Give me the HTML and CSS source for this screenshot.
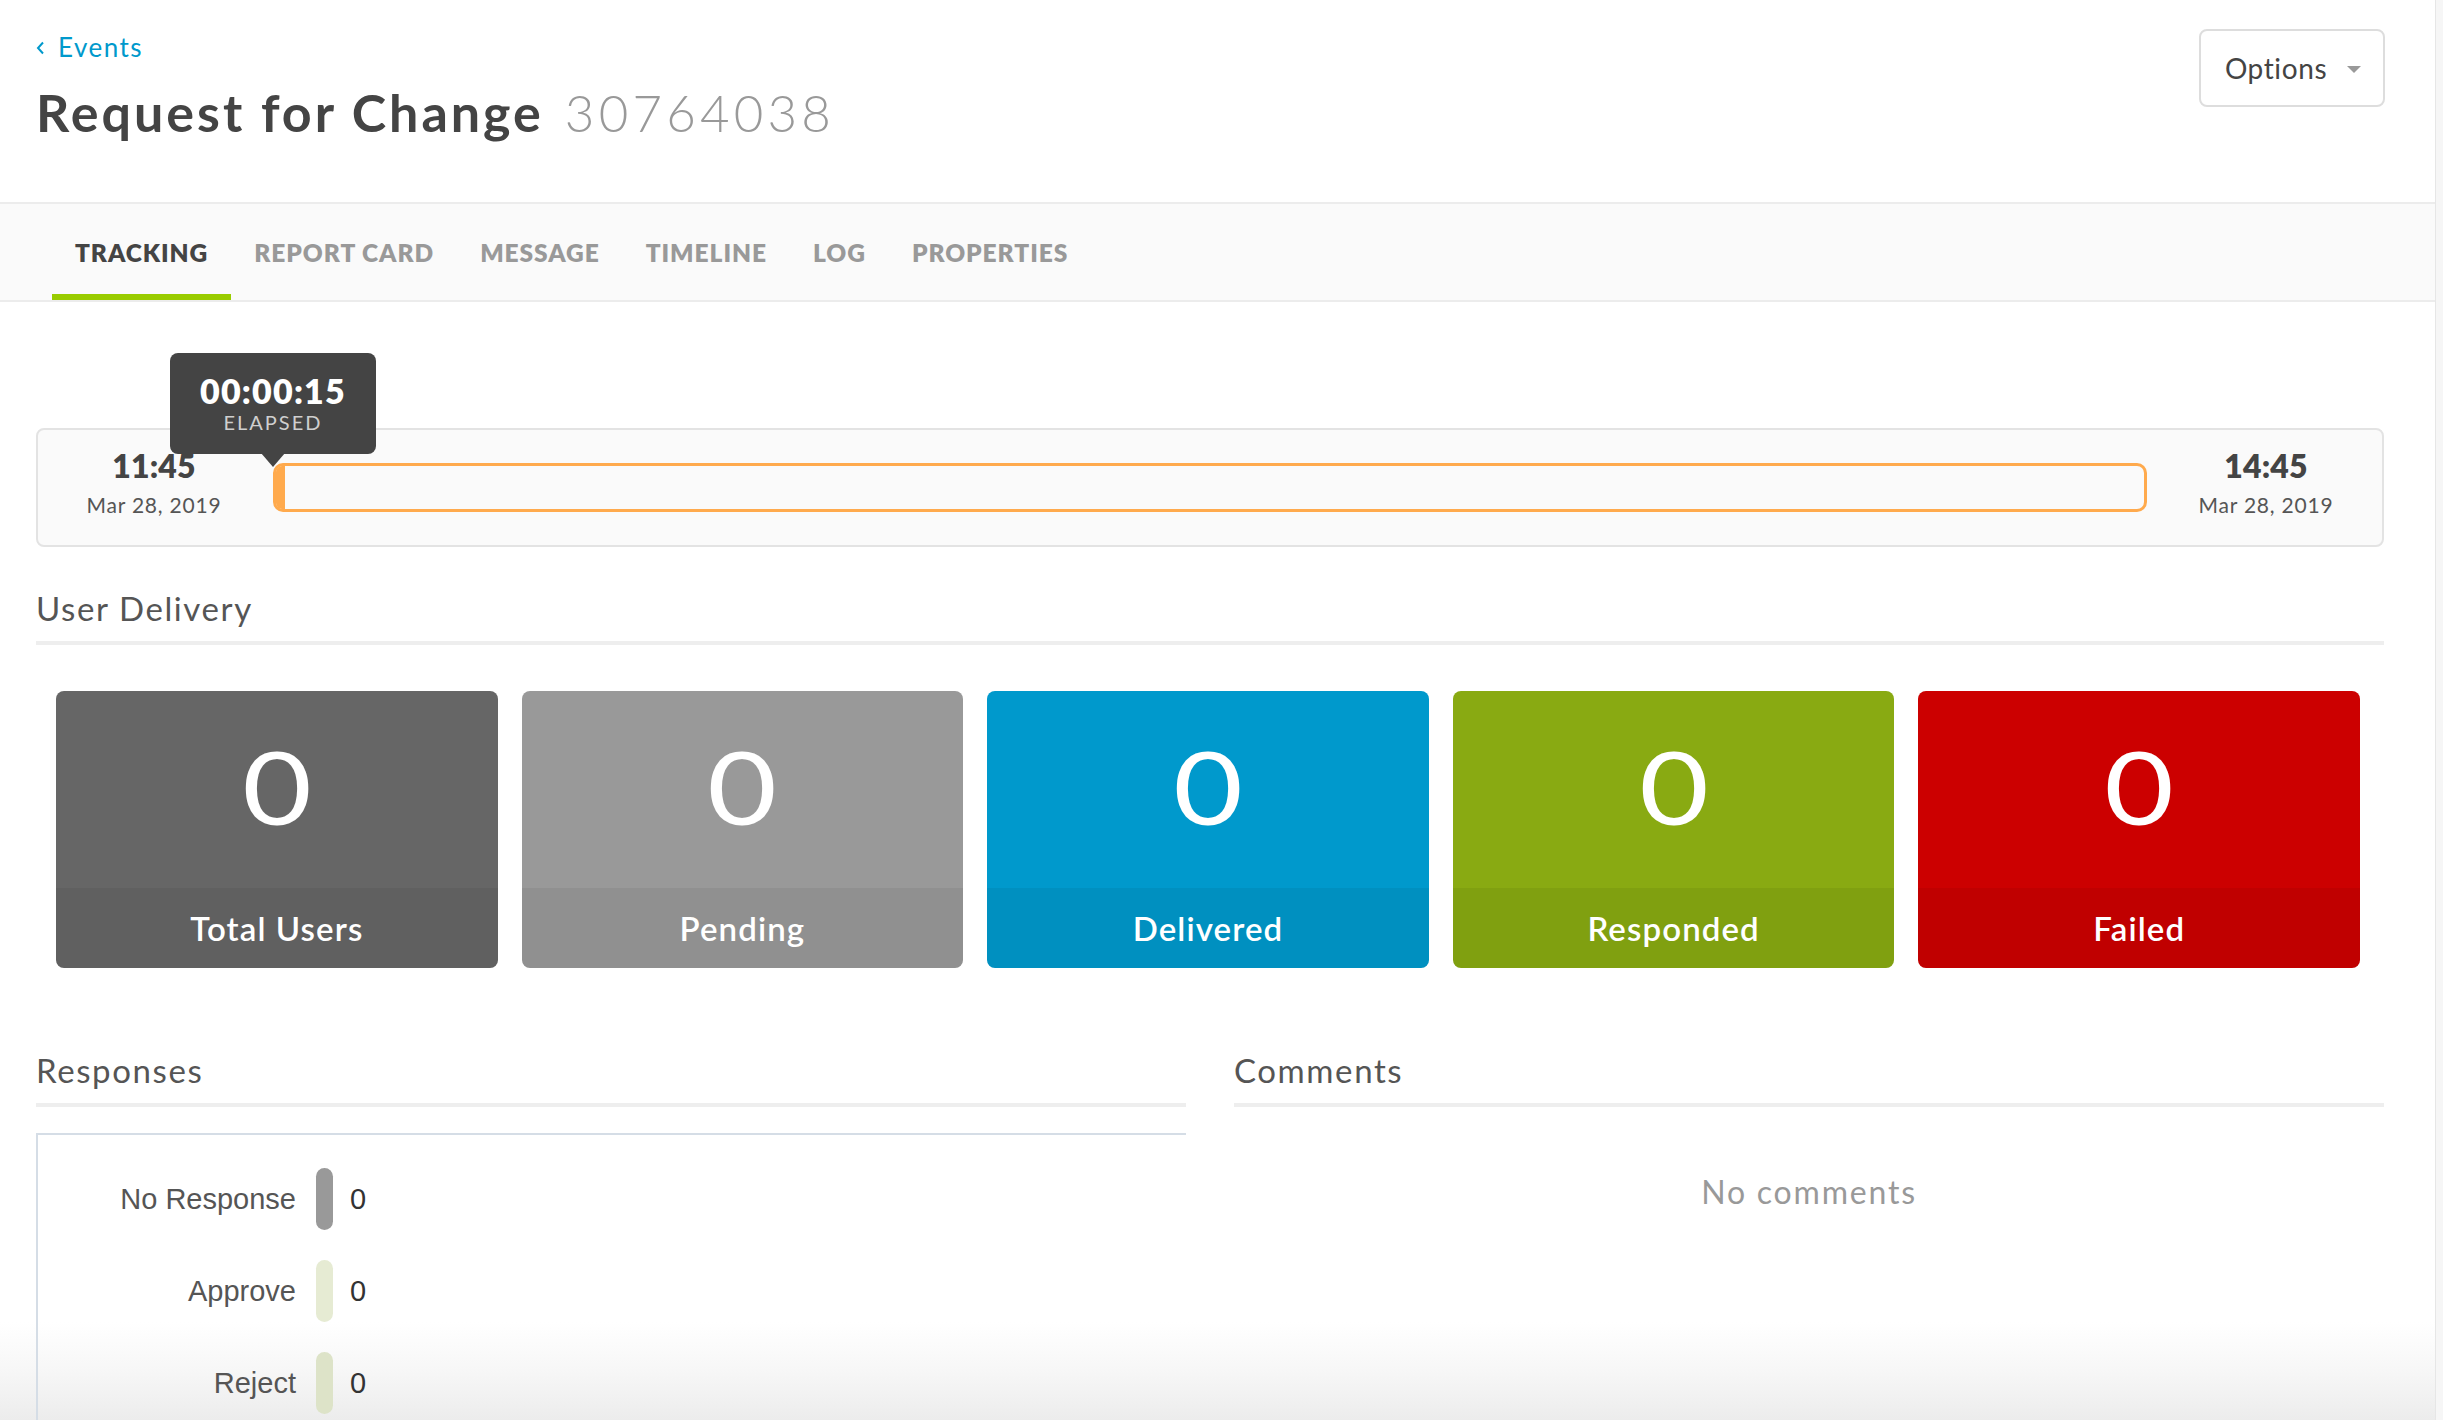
FILE: index.html
```html
<!DOCTYPE html>
<html lang="en">
<head>
<meta charset="utf-8">
<title>Request for Change 30764038</title>
<link rel="stylesheet" href="styles.css">
</head>
<body>
<div class="app">
  <main class="page">
    <header class="page-header">
      <div class="titles">
        <a class="back" href="#">
          <svg class="back-icon" width="9" height="14" viewBox="0 0 9 14"><polyline points="7,1.5 2,7 7,12.5" fill="none" stroke="#0099cc" stroke-width="2"/></svg>
          <span>Events</span>
        </a>
        <h1 class="title"><span class="title-text">Request for Change</span><span class="title-num">30764038</span></h1>
      </div>
      <button class="options" type="button"><span>Options</span><span class="caret"></span></button>
    </header>

    <nav class="tabs">
      <a class="tab active" href="#">TRACKING</a>
      <a class="tab" href="#">REPORT CARD</a>
      <a class="tab" href="#">MESSAGE</a>
      <a class="tab" href="#">TIMELINE</a>
      <a class="tab" href="#">LOG</a>
      <a class="tab" href="#">PROPERTIES</a>
    </nav>

    <div class="content">
      <section class="tracker">
        <div class="stamp start">
          <div class="stamp-time">11:45</div>
          <div class="stamp-date">Mar 28, 2019</div>
        </div>
        <div class="progress">
          <div class="progress-fill"></div>
          <div class="tooltip">
            <div class="tooltip-time">00:00:15</div>
            <div class="tooltip-label">ELAPSED</div>
          </div>
        </div>
        <div class="stamp end">
          <div class="stamp-time">14:45</div>
          <div class="stamp-date">Mar 28, 2019</div>
        </div>
      </section>

      <section class="delivery">
        <h2 class="section-title">User Delivery</h2>
        <div class="cards">
          <div class="card card-total"><div class="card-num"><span>0</span></div><div class="card-label">Total Users</div></div>
          <div class="card card-pending"><div class="card-num"><span>0</span></div><div class="card-label">Pending</div></div>
          <div class="card card-delivered"><div class="card-num"><span>0</span></div><div class="card-label">Delivered</div></div>
          <div class="card card-responded"><div class="card-num"><span>0</span></div><div class="card-label">Responded</div></div>
          <div class="card card-failed"><div class="card-num"><span>0</span></div><div class="card-label">Failed</div></div>
        </div>
      </section>

      <div class="lower">
        <section class="responses">
          <h2 class="section-title">Responses</h2>
          <div class="resp-box">
            <div class="resp-row"><span class="resp-label">No Response</span><span class="resp-bar bar-none"></span><span class="resp-val">0</span></div>
            <div class="resp-row"><span class="resp-label">Approve</span><span class="resp-bar bar-approve"></span><span class="resp-val">0</span></div>
            <div class="resp-row"><span class="resp-label">Reject</span><span class="resp-bar bar-reject"></span><span class="resp-val">0</span></div>
          </div>
        </section>
        <section class="comments">
          <h2 class="section-title">Comments</h2>
          <p class="empty">No comments</p>
        </section>
      </div>
    </div>
  </main>
  <div class="scrollbar"></div>
</div>
</body>
</html>
```

FILE: styles.css
```css
* { box-sizing: border-box; }
html, body { margin: 0; padding: 0; }
body {
  font-family: Lato, "Open Sans", sans-serif;
  color: #444;
  background: #fff;
  overflow: hidden;
}
.app {
  display: flex;
  height: 1420px;
  background: linear-gradient(to bottom, #ffffff 0, #ffffff 1322px, #f7f7f7 1370px, #ececec 1420px);
}
.page { flex: 1; min-width: 0; }
.scrollbar { width: 8px; background: #f6f6f6; border-left: 1px solid #e6e6e6; }

/* header */
.page-header {
  display: flex;
  justify-content: space-between;
  align-items: flex-start;
  padding: 32px 50px 60px 36px;
  height: 202px;
  background: #fff;
}
.titles { display: flex; flex-direction: column; }
.back {
  display: flex; align-items: center; gap: 13px;
  color: #0099cc; text-decoration: none;
  font-size: 26px; line-height: 30px; letter-spacing: 1.5px;
}
.back-icon { margin-top: 2px; }
.title {
  margin: 20px 0 0;
  display: flex; align-items: baseline; gap: 24px;
  font-size: 52px; line-height: 60px; font-weight: 700;
  color: #444; white-space: nowrap;
}
.title-text { letter-spacing: 3px; margin-right: -3px; }
.title-num { font-size: 51px; font-weight: 300; color: #999; letter-spacing: 4.2px; }
.options {
  margin-top: -3px;
  width: 186px; height: 78px;
  display: flex; align-items: center; justify-content: center; gap: 20px;
  padding: 0 0 0 2px;
  background: #fff;
  border: 2px solid #dddddd; border-radius: 8px;
  font-family: Lato, sans-serif; font-size: 28px; color: #444; letter-spacing: 0.6px;
}
.caret { width: 0; height: 0; border-left: 7px solid transparent; border-right: 7px solid transparent; border-top: 7px solid #999; margin-top: 2px; }

/* tabs */
.tabs {
  display: flex;
  height: 100px;
  padding-left: 52px;
  background: #fafafa;
  border-top: 2px solid #ececec;
  border-bottom: 2px solid #ececec;
}
.tab {
  display: flex; align-items: center;
  padding: 0 23px;
  font-size: 24.5px; font-weight: 800;
  color: #999; text-decoration: none;
  letter-spacing: 0.95px;
  border-bottom: 6px solid transparent;
  padding-top: 6px;
}
.tab.active { color: #444; border-bottom-color: #99cc00; }

/* content */
.content { padding: 0 51px 0 36px; }

.tracker {
  margin-top: 126px;
  height: 119px;
  display: flex; align-items: center; gap: 19px;
  padding: 0 16px;
  background: #fafafa;
  border: 2px solid #e3e3e3; border-radius: 8px;
}
.stamp { width: 200px; flex: none; text-align: center; margin-bottom: 9px; }
.stamp-time { font-size: 32px; line-height: 36px; font-weight: 800; color: #444; letter-spacing: 0.2px; }
.stamp-date { margin-top: 8px; font-size: 21px; line-height: 26px; color: #555; letter-spacing: 0.8px; }

.progress {
  position: relative;
  flex: 1;
  height: 49px;
  border: 3px solid #ffaa4d; border-radius: 10px;
  background: #fafafa;
}
.progress-fill { width: 9px; height: 100%; background: #ffaa4d; border-radius: 6px 0 0 6px; }
.tooltip {
  position: absolute;
  top: -113px; left: -106px;
  width: 206px; height: 101px;
  padding-top: 19px;
  background: #444; border-radius: 8px;
  text-align: center;
}
.tooltip::after {
  content: "";
  position: absolute; left: 91px; top: 100px;
  border-left: 12px solid transparent; border-right: 12px solid transparent;
  border-top: 14px solid #444;
}
.tooltip-time { font-size: 34px; line-height: 38px; font-weight: 800; color: #fff; letter-spacing: 1.2px; }
.tooltip-label { font-size: 20px; line-height: 24px; color: #cfcfcf; letter-spacing: 2px; }

.section-title {
  margin: 0;
  font-size: 33px; line-height: 40px; font-weight: 400;
  color: #555; letter-spacing: 1.6px;
  padding-bottom: 13px;
  border-bottom: 4px solid #eeeeee;
}
.delivery { margin-top: 41px; }
.cards {
  margin-top: 46px;
  display: grid; grid-template-columns: repeat(5, 1fr); gap: 24px;
  padding: 0 24px 0 20px;
}
.card {
  height: 277px; border-radius: 8px; overflow: hidden;
  display: flex; flex-direction: column;
  color: #fff;
}
.card-num {
  flex: 1;
  display: flex; align-items: center; justify-content: center;
  font-size: 100px; line-height: 1; font-weight: 400;
  padding-bottom: 8px;
}
.card-num span { display: inline-block; transform: scaleX(1.2); }
.card-label {
  height: 80px;
  display: flex; align-items: center; justify-content: center;
  background: rgba(0,0,0,0.06);
  font-size: 33px; font-weight: 600; letter-spacing: 1.1px;
}
.card-total { background: #666666; }
.card-pending { background: #999999; }
.card-delivered { background: #0099cc; }
.card-responded { background: #89aa12; }
.card-failed { background: #cc0000; }

.lower {
  margin-top: 82px;
  display: grid; grid-template-columns: 1fr 1fr; gap: 48px;
}
.resp-box {
  margin-top: 26px;
  border-top: 2px solid #d5dde6;
  border-left: 2px solid #d5dde6;
  padding-top: 33px;
  min-height: 320px;
  display: flex; flex-direction: column; gap: 30px;
}
.resp-row {
  display: grid; grid-template-columns: 258px 17px auto; column-gap: 20px;
  align-items: center;
  font-family: "Liberation Sans", Arial, sans-serif; font-size: 29px;
}
.resp-label { text-align: right; color: #555; }
.resp-val { color: #333; margin-left: -3px; }
.resp-bar { height: 62px; border-radius: 9px; }
.bar-none { background: #999999; }
.bar-approve { background: #e6ebd3; }
.bar-reject { background: #dde3c8; }

.empty {
  margin: 65px 0 0;
  text-align: center;
  font-size: 32px; line-height: 40px; color: #999; letter-spacing: 1.8px;
}
```
